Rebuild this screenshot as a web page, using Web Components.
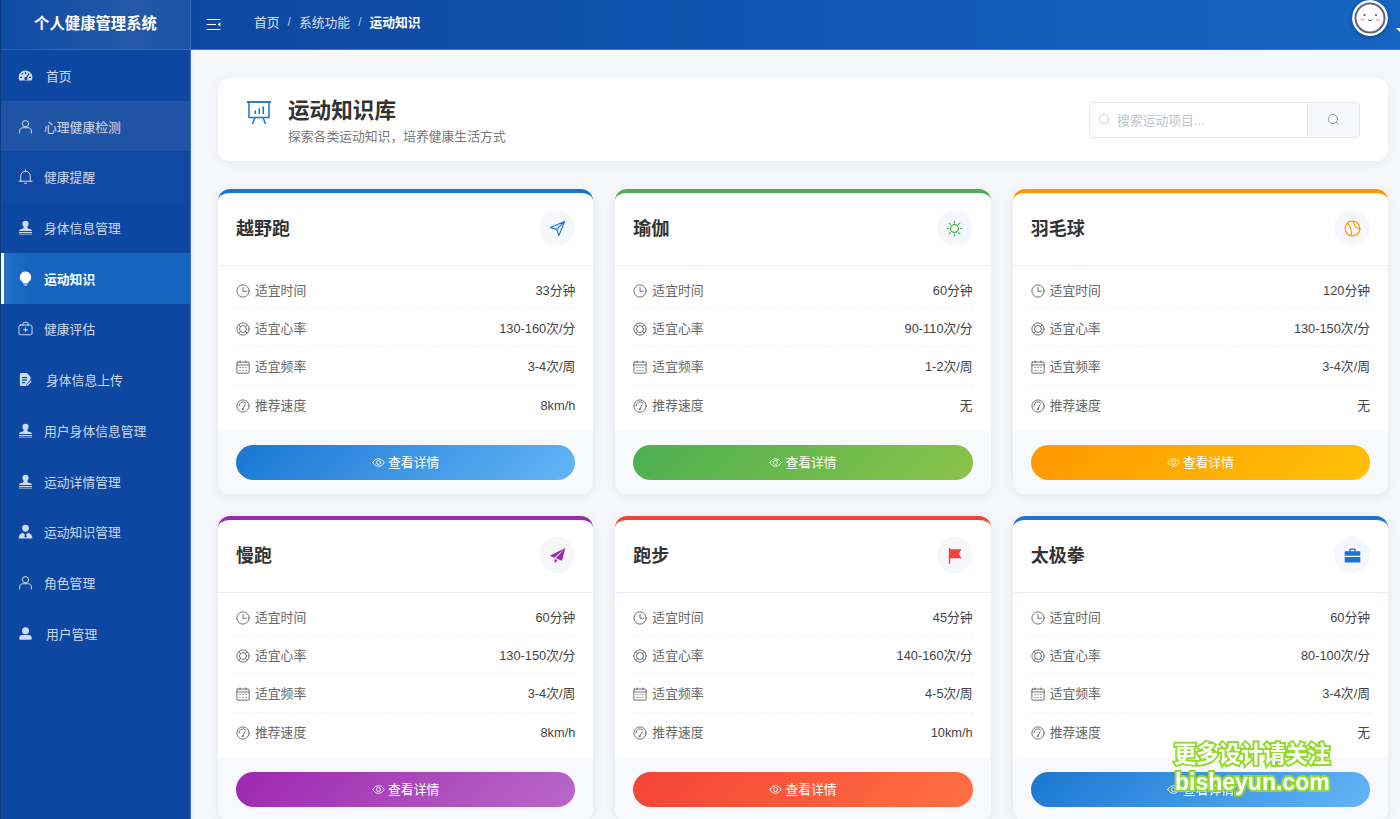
<!DOCTYPE html>
<html lang="zh"><head><meta charset="utf-8"><title>运动知识库</title>
<style>
html,body{margin:0;height:100%;overflow:hidden;background:#f5f7fa;font-family:"Liberation Sans","Noto Sans CJK SC",sans-serif;}
</style></head>
<body>
<app-shell>
  <side-bar slot="side">
    <nav-item icon="gauge" off="2">首页</nav-item>
    <nav-item icon="user" hover>心理健康检测</nav-item>
    <nav-item icon="bell" soft>健康提醒</nav-item>
    <nav-item icon="stamp">身体信息管理</nav-item>
    <nav-item icon="bulb" active>运动知识</nav-item>
    <nav-item icon="kit">健康评估</nav-item>
    <nav-item icon="doc" off="2">身体信息上传</nav-item>
    <nav-item icon="stamp">用户身体信息管理</nav-item>
    <nav-item icon="stamp">运动详情管理</nav-item>
    <nav-item icon="suit">运动知识管理</nav-item>
    <nav-item icon="user">角色管理</nav-item>
    <nav-item icon="solid" off="2">用户管理</nav-item>
  </side-bar>
  <top-bar slot="top"></top-bar>
  <page-head></page-head>
  <card-grid>
    <sport-card name="越野跑" icon="nav" c1="#1976d2" c2="#64b5f6" time="33分钟" rate="130-160次/分" freq="3-4次/周" speed="8km/h"></sport-card>
    <sport-card name="瑜伽" icon="sun" c1="#4caf50" c2="#8bc34a" time="60分钟" rate="90-110次/分" freq="1-2次/周" speed="无"></sport-card>
    <sport-card name="羽毛球" icon="ball" c1="#ff9800" c2="#ffc107" time="120分钟" rate="130-150次/分" freq="3-4次/周" speed="无"></sport-card>
    <sport-card name="慢跑" icon="plane" c1="#9c27b0" c2="#ba68c8" time="60分钟" rate="130-150次/分" freq="3-4次/周" speed="8km/h"></sport-card>
    <sport-card name="跑步" icon="flag" c1="#f44336" c2="#ff7043" time="45分钟" rate="140-160次/分" freq="4-5次/周" speed="10km/h"></sport-card>
    <sport-card name="太极拳" icon="case" c1="#1976d2" c2="#64b5f6" time="60分钟" rate="80-100次/分" freq="3-4次/周" speed="无"></sport-card>
  </card-grid>
</app-shell>
<water-mark></water-mark>
<script>
const S='fill="none" stroke="currentColor" stroke-width="1.6" stroke-linecap="round" stroke-linejoin="round"';
const ICONS={
 gauge:'<path fill="currentColor" fill-rule="evenodd" d="M12 4C6 4 1 8.800 1 15c0 1.700.4 3.200 1.200 4.800h19.600c.8-1.600 1.200-3.100 1.200-4.800C23 8.800 18 4 12 4zM7 7.500l1.800 2-1.300 1.200-1.900-2zM11 6.500h2v3h-2zM17 7.800l1.400 1.200-3.800 6.500a2.500 2.500 0 1 1-1.700-1zM3.500 14h3v2h-3zM17.500 14h3v2h-3z"/>',
 user:`<g ${S}><circle cx="12" cy="7.500" r="5"/><path d="M2.500 22.500v-3.500c0-3 2.500-5 5-5h9c2.500 0 5 2 5 5v3.500"/></g>`,
 bell:`<g ${S}><path d="M1.500 19.500h21M4.500 19.500V11a7.500 7.500 0 0 1 15 0v8.500M12 3.500V1.500M10.500 22.800h3"/></g>`,
 stamp:'<path fill="currentColor" d="M12 1a5 5 0 0 0-5 5c0 2.800 2 3.800 2 6 0 1.300-1.200 1.900-3.700 2.300C3 14.800 1.500 15.500 1.500 17.500h21c0-2-1.500-2.700-3.800-3.200-2.500-.4-3.700-1-3.700-2.300 0-2.200 2-3.200 2-6a5 5 0 0 0-5-5zM1.500 19h21v1.600h-21zM1.500 21.800h21V23h-21z"/>',
 bulb:'<path fill="currentColor" d="M12 1a9 9 0 0 0-5.300 16.300c.9.700 1.100 1.300 1.300 2.200h8c.2-.9.400-1.500 1.300-2.200A9 9 0 0 0 12 1zM8.800 20.300h6.400v1.300H8.800zM10 22.200h4V23h-4z"/>',
 kit:`<g ${S}><rect x="1.500" y="6.500" width="21" height="15.500" rx="2.500"/><path d="M8 6.500V4c0-1 .7-1.700 1.700-1.700h4.600c1 0 1.700.7 1.700 1.700v2.500M12 11v6M9 14h6"/></g>`,
 doc:'<path fill="currentColor" d="M5 1.500h9l6 5.500v5l-6.500 7.500-.7 3H5a2 2 0 0 1-2-2v-17a2 2 0 0 1 2-2zM6.500 8v1.800h8V8zm0 4v1.800h8V12zm0 4v1.800h5V16z" fill-rule="evenodd"/><path fill="currentColor" d="M20.500 13.500l1.500 1.300-6.500 7.200-2 .5.500-2z"/>',
 suit:'<path fill="currentColor" d="M12 1a5.500 5.500 0 0 0-5.500 5.500c0 3.200 2.500 6 5.500 6s5.500-2.800 5.500-6A5.500 5.500 0 0 0 12 1zM8 13.800C4 14.800 1 17.500 1 23h22c0-5.500-3-8.200-7-9.200l-3 3.200 1 3.500-2 1.500-2-1.500 1-3.500z"/>',
 solid:'<path fill="currentColor" d="M12 2a5.600 5.600 0 1 0 0 11.200A5.600 5.600 0 0 0 12 2zM7 14.500c-3 0-5 2-5 4.500v1c0 1.100.9 2 2 2h16c1.100 0 2-.9 2-2v-1c0-2.500-2-4.500-5-4.500z"/>',
 menu:'<path fill="currentColor" d="M1 3h22v1.800H1zM1 11h15v1.800H1zM1 19h22v1.800H1zM18.500 11.900L23 8.500v6.800z"/>',
 board:`<g fill="none" stroke="currentColor" stroke-width="1.500"><path stroke-width="1.900" d="M1 2h24"/><path d="M3 2v15.500h20V2M9 17.500L6.500 24M17 17.500L19.500 24"/></g><path fill="currentColor" d="M8.500 10.500h1.500V14H8.500zM12.500 8.500H14V14h-1.500zM16.500 6.500H18V14h-1.500z"/>`,
 search:`<g ${S}><circle cx="11" cy="11" r="8.500"/><path d="M17.500 17.500L20.500 20.500"/></g>`,
 clock:`<g ${S}><circle cx="12" cy="12" r="10.500"/><path d="M12 6v6.500h6"/></g>`,
 ring:`<g ${S}><circle cx="12" cy="12" r="10.500"/><circle cx="12" cy="12" r="6"/><path d="M5 5l3 3M19 5l-3 3M5 19l3-3M19 19l-3-3"/></g>`,
 cal:`<g ${S}><rect x="1.500" y="3.500" width="21" height="19" rx="1"/><path d="M1.500 8.500h21M7 1.500v3M17 1.500v3"/></g><path fill="currentColor" d="M6 12h2v1.700H6zM11 12h2v1.700h-2zM16 12h2v1.700h-2zM6 17h2v1.700H6zM11 17h2v1.700h-2zM16 17h2v1.700h-2z"/>`,
 speed:`<g ${S}><circle cx="12" cy="12" r="10.500"/><path d="M5 12a7 7 0 0 1 12-5M12 17l3.500-7"/></g><circle cx="11.500" cy="17.500" r="1.600" fill="currentColor"/>`,
 eye:`<g ${S}><path d="M1.500 12C4 7.500 8 5 12 5s8 2.500 10.500 7c-2.500 4.500-6.500 7-10.500 7S4 16.500 1.500 12z"/><circle cx="12" cy="12" r="3.800"/></g>`,
 nav:`<g ${S}><path stroke-width="1.600" d="M22 2L2 10.500l8.800 2.700L14 22zM22 2L10.800 13.200"/></g>`,
 sun:`<g ${S}><circle cx="12" cy="12" r="5.500"/><path d="M12 1.500v2.500M12 20v2.500M1.500 12H4M20 12h2.500M4.500 4.500l1.800 1.800M17.700 17.700l1.800 1.800M19.500 4.500l-1.800 1.800M6.300 17.700l-1.800 1.800"/></g>`,
 ball:`<g ${S}><circle cx="12" cy="12" r="10.500"/><path d="M5 4.500c3.500 3.500 6 8.500 5.500 17M13.500 1.700c-.5 4.500 2.500 9.500 8.700 10.800"/></g>`,
 plane:'<path fill="currentColor" d="M23 1.500L1 12.500l6.500 2.500zM23 1.500L9.500 16l9 3.500zM8 17v6l4-4.300z"/>',
 flag:'<path fill="currentColor" d="M4 1.500h2v22H4zM6 3h16l-4 6.500 4 6.500H6z"/>',
 case:'<path fill="currentColor" fill-rule="evenodd" d="M7.500 6V3.500c0-1 .7-1.500 1.500-1.500h6c.8 0 1.500.5 1.500 1.500V6H23v6.500H1V6zM9.500 4v2h5V4zM1 14h22v8H1z"/>'
};
function def(name,css,html){
  customElements.define(name,class extends HTMLElement{
    constructor(){super();this.attachShadow({mode:'open'});}
    connectedCallback(){
      const h=typeof html==='function'?html(this):html;
      this.shadowRoot.innerHTML=`<style>${css}</style>${h}`;
    }
  });
}
def('x-icon',':host{display:inline-flex;width:var(--s,14px);height:var(--s,14px);flex:none}svg{width:100%;height:100%;display:block}',
 e=>`<svg viewBox="0 0 ${e.getAttribute('vb')||24} ${e.getAttribute('vb')||24}" aria-hidden="true">${ICONS[e.getAttribute('name')]||''}</svg>`);
def('app-shell',`:host{display:flex;width:1400px;height:819px;overflow:hidden}
 .side{flex:none;width:191px}
 .main{flex:1;min-width:0;display:flex;flex-direction:column;background:#f5f7fa}
 .content{flex:1;min-height:0;overflow:hidden;padding:28px 12px 0 27px;display:flex;flex-direction:column;gap:28px;box-shadow:inset 6px 0 6px -6px rgba(0,0,0,.08)}`,
 `<div class="side"><slot name="side"></slot></div><div class="main"><slot name="top"></slot><div class="content"><slot></slot></div></div>`);
def('side-bar',`:host{display:flex;flex-direction:column;height:819px;box-sizing:border-box;background:#0d47a1;border-right:1px solid #3f70b8;border-left:1px solid #0a3a86}
 header{height:50px;flex:none;display:flex;align-items:center;justify-content:center;color:#fff;font-weight:700;font-size:15.36px;background:linear-gradient(90deg,#0f4aa2,#2459a8 70%,#1a52a5);box-shadow:inset 0 -1px 0 rgba(255,255,255,.12);padding-bottom:7px;box-sizing:border-box}
 nav{display:flex;flex-direction:column}`,
 `<header>个人健康管理系统</header><nav><slot></slot></nav>`);
def('nav-item',`:host{display:flex;align-items:center;height:50.73px;flex:none;box-sizing:border-box;padding-left:16.5px;color:rgba(255,255,255,.8);font-size:12.8px;--s:15px}
 :host([hover]){background:#1f54a5}
 :host([soft]){background:#1049a3}
 :host([active]){background:linear-gradient(90deg,#2a72c6 0,#1565c0 14%);color:#fff;font-weight:700;box-shadow:inset 3px 0 0 #fff}
 x-icon{margin-right:11.5px}`,
 e=>`<x-icon name="${e.getAttribute('icon')}"></x-icon><span style="margin-left:${e.getAttribute('off')||0}px"><slot></slot></span>`);
def('top-bar',`:host{display:flex;align-items:center;height:50px;flex:none;box-sizing:border-box;padding:0 12px 0 15px;background:linear-gradient(90deg,#0d47a1,#1565c0);color:#fff;font-size:12.8px;border-bottom:1px solid #3f79c6;overflow:hidden;position:relative}
 .m{--s:15px;margin-right:33px}
 .b,.s,.c{margin-bottom:6px}
 .b{color:rgba(255,255,255,.85)}.s{color:rgba(255,255,255,.7);margin-left:8px;margin-right:8px;font-size:12px}.c{font-weight:700;color:#fff}
 .r{margin-left:auto;align-self:flex-start;position:relative;width:36px;height:36px}
 .car{position:absolute;left:44px;top:27.500px;width:0;height:0;border:4px solid transparent;border-top:4px solid #fff;border-bottom:0}
 svg{display:block;width:36px;height:36px;border-radius:50%;box-shadow:0 1px 4px rgba(0,0,0,.25)}`,
 `<x-icon class="m" name="menu"></x-icon><span class="b">首页</span><span class="s">/</span><span class="b">系统功能</span><span class="s">/</span><span class="c">运动知识</span>
 <div class="r"><svg viewBox="0 0 36 36"><circle cx="18" cy="18" r="18" fill="#fff"/><circle cx="18" cy="18" r="14.500" fill="#fff" stroke="#5e6580" stroke-width="2"/><circle cx="12.500" cy="15" r="1.100" fill="#4d5470"/><circle cx="24" cy="15" r="1.100" fill="#4d5470"/><ellipse cx="10.500" cy="19.500" rx="2.300" ry="1.200" fill="#f6c4c6"/><ellipse cx="26" cy="20" rx="2.300" ry="1.200" fill="#f6c4c6"/><path d="M16 19.500c.8 1.400 3.200 1.400 4 0" fill="none" stroke="#4d5470" stroke-width="1"/></svg><span class="car"></span></div>`);
def('page-head',`:host{display:flex;align-items:center;height:83px;flex:none;box-sizing:border-box;background:#fff;border-radius:12px;box-shadow:0 2px 12px rgba(0,0,0,.05);padding:0 28px}
 x-icon{--s:26px;color:#1976d2;margin-right:16px;margin-top:-14px}
 h1{margin:0;font-size:21.6px;line-height:28px;color:#333;font-weight:700}
 p{margin:3px 0 0;font-size:12.8px;line-height:18px;color:#777}
 .t{margin-top:3px}
 page-search{margin-left:auto}`,
 `<x-icon name="board" vb="26"></x-icon><div class="t"><h1>运动知识库</h1><p>探索各类运动知识&#xFF0C;培养健康生活方式</p></div><page-search></page-search>`);
def('page-search',`:host{display:flex;width:271px;height:36px;box-sizing:border-box;border:1px solid #e4e7ed;border-radius:4px;overflow:hidden;background:#fff;font-size:12.8px}
 .i{flex:1;display:flex;align-items:center;padding-left:8px;color:#c0c4cc;--s:13px}
 .i x-icon{margin-right:6px}
 .b{width:52px;box-sizing:border-box;flex:none;background:#f5f7fa;border-left:1px solid #e4e7ed;display:flex;align-items:center;justify-content:center;color:#8c9199;--s:13px}`,
 `<div class="i"><x-icon name="search"></x-icon>搜索运动项目...</div><div class="b"><x-icon name="search"></x-icon></div>`);
def('card-grid',`:host{display:grid;grid-template-columns:repeat(3,1fr);gap:22px}`,`<slot></slot>`);
def('info-row',`:host{display:flex;align-items:flex-start;height:38.2px;box-sizing:border-box;padding-top:10px;line-height:20px;font-size:12.8px;border-bottom:1px dashed #f0f2f5}
 x-icon{--s:14px;color:#666;margin:3px 5px 0 0}
 .l{color:#666}.v{margin-left:auto;color:#444}`,
 e=>`<x-icon name="${e.getAttribute('icon')}"></x-icon><span class="l">${e.getAttribute('label')}</span><span class="v">${e.getAttribute('value')}</span>`);
def('sport-card',`:host{display:flex;flex-direction:column;height:305px;box-sizing:border-box;background:#fff;border-radius:12px;border-top:4px solid var(--c1);box-shadow:0 2px 12px rgba(0,0,0,.07);overflow:hidden}
 header{height:73px;flex:none;box-sizing:border-box;display:flex;align-items:center;justify-content:space-between;padding:0 18px 2px;border-bottom:1px solid #ebeef5}
 h3{margin:0 0 2px;font-size:18px;color:#333;font-weight:700}
 .o{width:36px;height:36px;border-radius:50%;background:#f5f7fa;display:flex;align-items:center;justify-content:center;color:var(--c1);--s:17px}
 .body{flex:none;height:165px;box-sizing:border-box;padding:5px 18px 0;display:flex;flex-direction:column}
 footer{flex:1;background:#f8f9fc;padding:14px 18px 0}
 .btn{height:35px;border-radius:18px;background:linear-gradient(135deg,var(--c1),var(--c2));color:#fff;font-size:12.8px;display:flex;align-items:center;justify-content:center;gap:3px;--s:13px}
 .btn span{margin-bottom:2px}`,
 e=>{const a=n=>e.getAttribute(n);e.style.setProperty('--c1',a('c1'));e.style.setProperty('--c2',a('c2'));
 return `<header><h3>${a('name')}</h3><div class="o"><x-icon name="${a('icon')}"></x-icon></div></header>
 <div class="body"><info-row icon="clock" label="适宜时间" value="${a('time')}"></info-row><info-row icon="ring" label="适宜心率" value="${a('rate')}"></info-row><info-row icon="cal" label="适宜频率" value="${a('freq')}"></info-row><info-row icon="speed" label="推荐速度" value="${a('speed')}" style="border-bottom:0"></info-row></div>
 <footer><div class="btn"><x-icon name="eye"></x-icon><span>查看详情</span></div></footer>`});
def('water-mark',`:host{position:fixed;left:1174px;top:741px;display:block;color:#fff;font-weight:700;-webkit-text-stroke:4px #93d92f;white-space:nowrap}
 div{paint-order:stroke fill}
 .a{font-size:22.300px;line-height:28px}.b{font-size:23px;line-height:26px;padding-left:1px}`,
 `<div class="a">更多设计请关注</div><div class="b">bisheyun.com</div>`);
</script>
</body></html>
